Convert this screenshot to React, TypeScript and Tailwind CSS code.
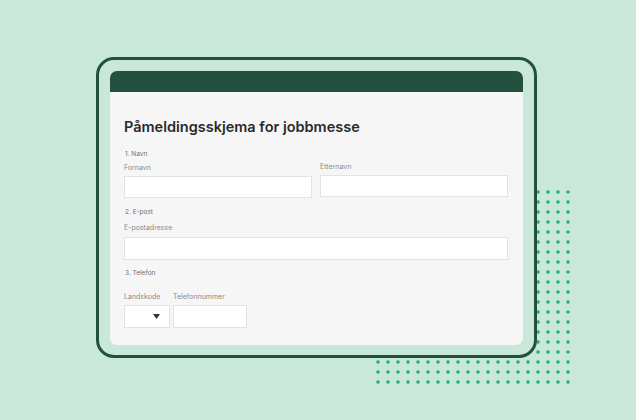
import React from "react";

const dots = Array.from({ length: 400 }, (_, k) => ({ x: 5 + (k % 20) * 10, y: 5 + Math.floor(k / 20) * 10 }));

function Label({ children, className = "" }: { children: React.ReactNode; className?: string }) {
  return <div className={`text-[7px] leading-[10px] text-[#8a8a8a] ${className}`}>{children}</div>;
}

function Field({ className = "" }: { className?: string }) {
  return <div className={`border border-[#e3e3e3] bg-white ${className}`} />;
}

export default function App() {
  return (
    <div
      className="relative h-[420px] w-[636px] overflow-hidden bg-[#c9e8da]"
      style={{ fontFamily: "Inter, 'Noto Sans', sans-serif" }}
    >
      {/* dotted decoration behind the frame */}
      <svg className="absolute left-[373px] top-[187px]" width="200" height="200" viewBox="0 0 200 200">
        {dots.map((d, i) => (
          <circle key={i} cx={d.x} cy={d.y} r="1.8" fill="#19b570" />
        ))}
      </svg>

      <div className="relative pl-[96px] pt-[57px]">
        <div className="h-[301px] w-[441px] rounded-[18px] border-[3px] border-[#22513f] bg-[#c9e8da] p-[11px] pb-[10px]">
          <div className="h-full overflow-hidden rounded-[7px] bg-[#f6f6f6]">
            <div className="h-[21px] bg-[#22513f]" />
            <div className="pl-[14px] pr-[15px]">
              <h1 className="mt-[25px] text-[14.5px] font-semibold leading-[20px] text-[#2a2a2a]">
                Påmeldingsskjema for jobbmesse
              </h1>

              <div className="mt-[12px] pl-[1px] text-[6.5px] leading-[10px] text-[#6f6f6f]">1. Navn</div>
              <div className="grid grid-cols-2 gap-[8px]">
                <div>
                  <Label className="mt-[4px]">Fornavn</Label>
                  <Field className="mt-[3px] h-[22px]" />
                </div>
                <div>
                  <Label className="mt-[3px]">Etternavn</Label>
                  <Field className="mt-[3px] h-[22px]" />
                </div>
              </div>

              <div className="mt-[9px] pl-[1px] text-[6.5px] leading-[10px] text-[#6f6f6f]">2. E-post</div>
              <Label className="mt-[6px]">E-postadresse</Label>
              <Field className="mt-[4px] h-[23px]" />

              <div className="mt-[8px] pl-[1px] text-[6.5px] leading-[10px] text-[#6f6f6f]">3. Telefon</div>
              <div className="mt-[14px] flex gap-[3px]">
                <div>
                  <Label>Landskode</Label>
                  <div className="mt-[3px] flex h-[23px] w-[46px] items-center justify-end border border-[#e3e3e3] bg-white pr-[9px]">
                    <svg width="7" height="5" viewBox="0 0 7 5">
                      <polygon points="0,0 7,0 3.5,5" fill="#333" />
                    </svg>
                  </div>
                </div>
                <div>
                  <Label>Telefonnummer</Label>
                  <Field className="mt-[3px] h-[23px] w-[74px]" />
                </div>
              </div>
            </div>
          </div>
        </div>
      </div>
    </div>
  );
}
